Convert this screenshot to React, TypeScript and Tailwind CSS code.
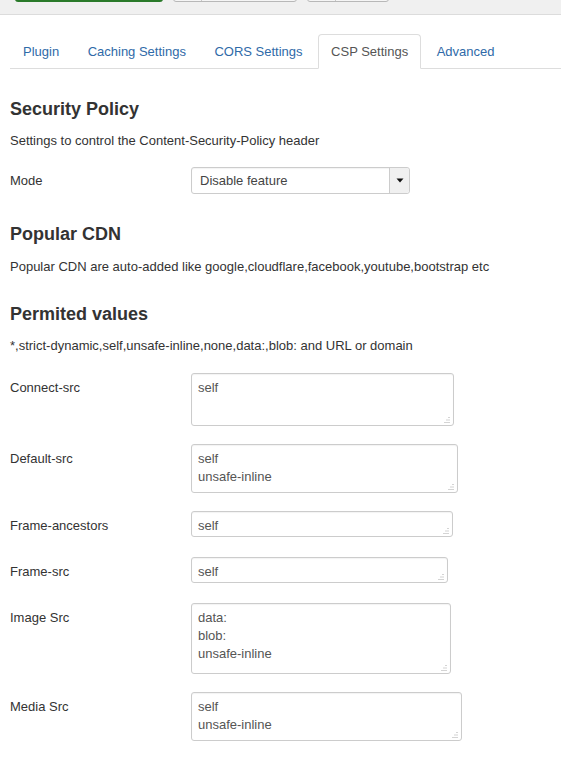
import React from "react";

const tabs = ["Plugin", "Caching Settings", "CORS Settings", "CSP Settings", "Advanced"];

type Row = { label: string; lines: string[]; w: string; h: string; mb: string };

const rows: Row[] = [
  { label: "Connect-src", lines: ["self"], w: "w-[263px]", h: "h-[53px]", mb: "mb-[18px]" },
  { label: "Default-src", lines: ["self", "unsafe-inline"], w: "w-[267px]", h: "h-[49px]", mb: "mb-[18px]" },
  { label: "Frame-ancestors", lines: ["self"], w: "w-[262px]", h: "h-[26px]", mb: "mb-[20px]" },
  { label: "Frame-src", lines: ["self"], w: "w-[257px]", h: "h-[26px]", mb: "mb-[20px]" },
  { label: "Image Src", lines: ["data:", "blob:", "unsafe-inline"], w: "w-[260px]", h: "h-[71px]", mb: "mb-[18px]" },
  { label: "Media Src", lines: ["self", "unsafe-inline"], w: "w-[271px]", h: "h-[49px]", mb: "mb-[18px]" },
];

function Grip() {
  return (
    <svg className="absolute right-[3px] bottom-[2px]" width="6" height="6" viewBox="0 0 6 6">
      <rect x="4.5" y="0" width="1" height="1" fill="#a8a8a8" />
      <rect x="2.5" y="2.5" width="1" height="1" fill="#a8a8a8" />
      <rect x="4.5" y="2.5" width="1" height="1" fill="#a8a8a8" />
      <rect x="0.5" y="5" width="1" height="1" fill="#a8a8a8" />
      <rect x="2.5" y="5" width="1" height="1" fill="#a8a8a8" />
      <rect x="4.5" y="5" width="1" height="1" fill="#a8a8a8" />
    </svg>
  );
}

function Heading({ children, mt }: { children: React.ReactNode; mt: string }) {
  return <h3 className={`${mt} text-[18px] leading-[20px] font-bold text-[#333]`}>{children}</h3>;
}

export default function App() {
  return (
    <div className="min-h-[758px] bg-white text-[13px] leading-[18px] text-[#333]" style={{ fontFamily: '"Liberation Sans", Arial, sans-serif' }}>
      {/* toolbar */}
      <div className="h-[15px] bg-[#f0f0f0] border-b border-[#dcdcdc] flex items-start pl-[15px] gap-[10px] overflow-hidden">
        <div className="w-[148px] h-[28px] -mt-[26px] rounded-[3px] bg-[#3a9a3a] border border-[#2a7a2a] border-b-[2px]" />
        <div className="w-[124px] h-[28px] -mt-[26px] rounded-[3px] bg-[#f5f5f5] border border-[#b8b8b8] flex">
          <div className="w-[28px] border-r border-[#c8c8c8]" />
        </div>
        <div className="w-[82px] h-[28px] -mt-[26px] rounded-[3px] bg-[#f5f5f5] border border-[#b8b8b8] flex">
          <div className="w-[28px] border-r border-[#c8c8c8]" />
        </div>
      </div>

      <div className="pl-[10px]">
        {/* tabs */}
        <ul className="mt-[19px] flex border-b border-[#ddd]">
          {tabs.map((t) => {
            const active = t === "CSP Settings";
            return (
              <li key={t} className="-mb-px mr-[2.5px]">
                <div
                  className={
                    active
                      ? "px-[12px] pt-[8px] pb-[7px] leading-[18px] border border-[#ddd] border-b-white bg-white rounded-t-[4px] text-[#555]"
                      : "px-[12px] pt-[8px] pb-[7px] leading-[18px] border border-transparent text-[#2f6aa8]"
                  }
                >
                  {t}
                </div>
              </li>
            );
          })}
        </ul>

        {/* Security Policy */}
        <Heading mt="mt-[30px]">Security Policy</Heading>
        <p className="mt-[13px]">Settings to control the Content-Security-Policy header</p>
        <div className="mt-[17px] flex">
          <div className="w-[181px] pt-[5px]">Mode</div>
          <div className="w-[219px] h-[27px] border border-[#ccc] rounded-[3px] flex bg-white shadow-[inset_0_1px_1px_rgba(0,0,0,0.05)]">
            <div className="flex-1 pl-[8px] pt-[5px] leading-[16px] text-[#444]">Disable feature</div>
            <div className="w-[20px] border-l border-[#ccc] bg-[#f0f0f0] rounded-r-[3px] flex items-center justify-center">
              <svg width="8" height="5" viewBox="0 0 8 5">
                <path d="M0.5 0.5 H7.5 L4 4.5 Z" fill="#111" />
              </svg>
            </div>
          </div>
        </div>

        {/* Popular CDN */}
        <Heading mt="mt-[30px]">Popular CDN</Heading>
        <p className="mt-[14px]">Popular CDN are auto-added like google,cloudflare,facebook,youtube,bootstrap etc</p>

        {/* Permited values */}
        <Heading mt="mt-[28px]">Permited values</Heading>
        <p className="mt-[13px]">*,strict-dynamic,self,unsafe-inline,none,data:,blob: and URL or domain</p>

        <div className="mt-[18px] flex flex-col">
          {rows.map((r) => (
            <div key={r.label} className={`flex ${r.mb}`}>
              <div className="w-[181px] pt-[6px]">{r.label}</div>
              <div
                className={`relative ${r.w} ${r.h} border border-[#ccc] rounded-[3px] bg-white px-[6px] pt-[5px] text-[#555] shadow-[inset_0_1px_1px_rgba(0,0,0,0.05)]`}
              >
                {r.lines.map((l, i) => (
                  <div key={i}>{l}</div>
                ))}
                <Grip />
              </div>
            </div>
          ))}
        </div>
      </div>
    </div>
  );
}
